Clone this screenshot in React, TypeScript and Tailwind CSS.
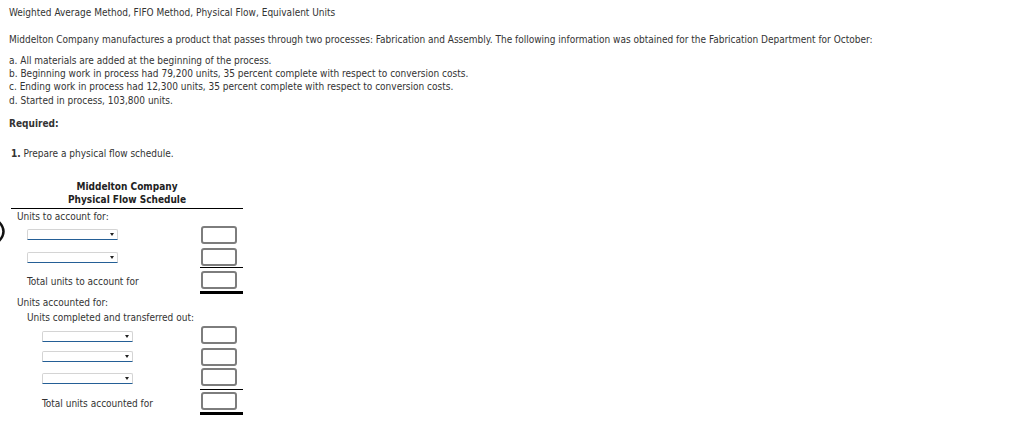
import React from "react";

const font = {
  fontFamily: '"DejaVu Sans", Verdana, sans-serif',
};

function Select({ w }: { w: string }) {
  return (
    <div
      className={`relative h-[11px] ${w} bg-white border border-[#d4d4d4] border-b-[#245f96] rounded-t-[2px]`}
    >
      <div className="absolute right-[3px] top-[3px] w-0 h-0 border-x-[2.5px] border-x-transparent border-t-[3px] border-t-[#222]" />
    </div>
  );
}

function Box() {
  return <div className="ml-[1px] w-[36px] h-[18px] border-2 border-[#7d7d7d] rounded-[3px] bg-white" />;
}

export default function App() {
  return (
    <div
      className="relative w-[1035px] h-[423px] bg-white text-[#333] text-[10px] leading-[13.33px] pl-[9px] pt-[6px] [font-stretch:condensed]"
      style={font}
    >
      <svg className="absolute left-0 top-[220px]" width="8" height="24" viewBox="0 0 8 24">
        <path d="M-1 2 Q 8 11.5 -1 21" fill="none" stroke="#111" strokeWidth="2.4" />
      </svg>

      <div>Weighted Average Method, FIFO Method, Physical Flow, Equivalent Units</div>
      <div className="mt-[14px]">
        Middelton Company manufactures a product that passes through two processes: Fabrication and Assembly. The
        following information was obtained for the Fabrication Department for October:
      </div>
      <div className="mt-[7px]">
        <div>a. All materials are added at the beginning of the process.</div>
        <div>b. Beginning work in process had 79,200 units, 35 percent complete with respect to conversion costs.</div>
        <div>c. Ending work in process had 12,300 units, 35 percent complete with respect to conversion costs.</div>
        <div>d. Started in process, 103,800 units.</div>
      </div>
      <div className="mt-[10px] font-bold">Required:</div>
      <div className="mt-[16.7px] ml-[2px]">
        <span className="font-bold">1.</span> Prepare a physical flow schedule.
      </div>

      <div className="mt-[19.63px] ml-[2px] w-[232px]">
        <div className="border-b border-black pb-[1.33px] text-center font-bold text-[#222]">
          <div>Middelton Company</div>
          <div>Physical Flow Schedule</div>
        </div>

        {/* Units to account for */}
        <div className="flex h-[15px] items-center">
          <div className="flex-1 pl-[6px] pt-[1px]">Units to account for:</div>
          <div className="w-[43px]" />
        </div>
        <div className="flex h-[22px]">
          <div className="flex-1 pl-[16px] pt-[5px]">
            <Select w="w-[91px]" />
          </div>
          <div className="w-[43px] pt-[2px]">
            <Box />
          </div>
        </div>
        <div className="flex h-[21px]">
          <div className="flex-1 pl-[16px] pt-[6px]">
            <Select w="w-[91px]" />
          </div>
          <div className="w-[43px] pt-[2px]">
            <Box />
          </div>
        </div>
        <div className="flex items-center">
          <div className="flex-1 pl-[16px] pt-[3px]">Total units to account for</div>
          <div className="w-[43px] border-t border-black border-b-[3px] pt-[3px] pb-[2px]">
            <Box />
          </div>
        </div>

        {/* Units accounted for */}
        <div className="flex h-[16px] items-center">
          <div className="flex-1 pl-[6px] pt-[2px]">Units accounted for:</div>
          <div className="w-[43px]" />
        </div>
        <div className="flex h-[15px] items-center">
          <div className="flex-1 pl-[16px] pt-[1px]">Units completed and transferred out:</div>
          <div className="w-[43px]" />
        </div>
        <div className="flex h-[22px]">
          <div className="flex-1 pl-[31px] pt-[6px]">
            <Select w="w-[91px]" />
          </div>
          <div className="w-[43px] pt-[1px]">
            <Box />
          </div>
        </div>
        <div className="flex h-[20px]">
          <div className="flex-1 pl-[31px] pt-[4px]">
            <Select w="w-[91px]" />
          </div>
          <div className="w-[43px] pt-[1px]">
            <Box />
          </div>
        </div>
        <div className="flex h-[22px]">
          <div className="flex-1 pl-[31px] pt-[6px]">
            <Select w="w-[91px]" />
          </div>
          <div className="w-[43px] pt-[1px]">
            <Box />
          </div>
        </div>
        <div className="flex items-center">
          <div className="flex-1 pl-[31px] pt-[3px]">Total units accounted for</div>
          <div className="w-[43px] border-t border-black border-b-[3px] pt-[2px] pb-[2px]">
            <Box />
          </div>
        </div>
      </div>
    </div>
  );
}
